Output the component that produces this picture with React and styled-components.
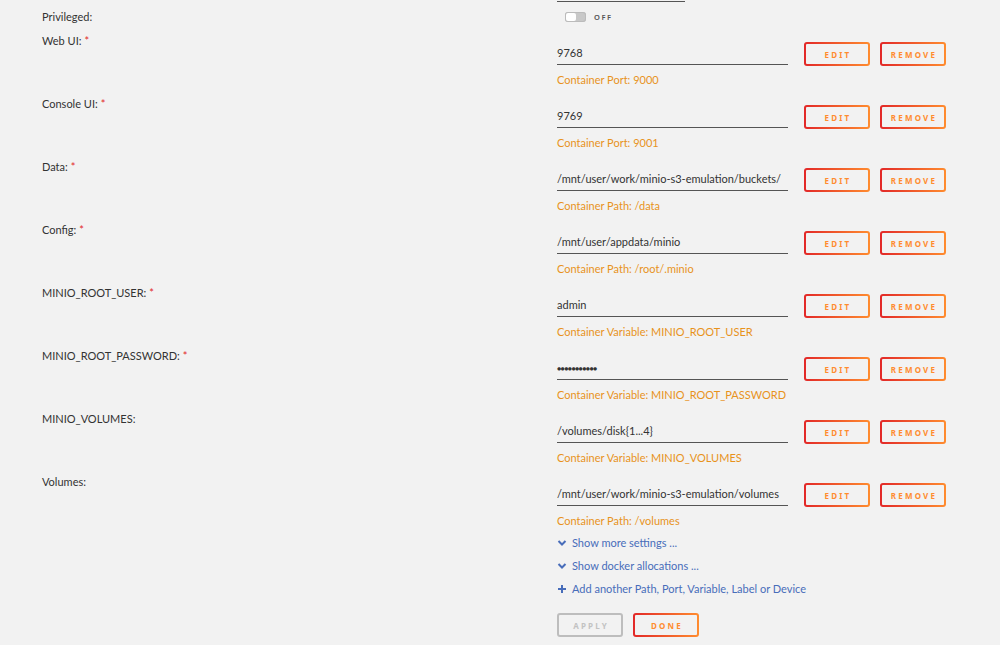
import React from "react";
import styled, { createGlobalStyle, css } from "styled-components";

const GlobalStyle = createGlobalStyle`
  html, body {
    margin: 0;
    padding: 0;
    background: #f2f2f2;
  }
  body {
    font-family: Lato, "Noto Sans", sans-serif;
    font-size: 11px;
    color: #333;
  }
`;

const Page = styled.div`
  width: 1000px;
  height: 645px;
  overflow: hidden;
  background: #f2f2f2;
`;

const TopLine = styled.div`
  margin-left: 557px;
  width: 128px;
  height: 1px;
  border-bottom: 1px solid #555;
`;

const Row = styled.div`
  display: grid;
  grid-template-columns: 515px 1fr;
  padding-left: 42px;
  ${(props) =>
    props.compact
      ? css`
          height: 24px;
          margin-top: 8px;
        `
      : css`
          height: 63px;
        `}
`;

const Label = styled.div`
  line-height: 14px;
  color: #333;
  .req {
    color: #e22828;
    margin-left: 3px;
  }
`;

const Cell = styled.div`
  padding-top: ${(props) => (props.compact ? "0" : "8px")};
`;

const Controls = styled.div`
  display: flex;
  align-items: flex-start;
  gap: 10px;
`;

const Field = styled.div`
  width: 231px;
  height: 22px;
  line-height: 22px;
  border-bottom: 1px solid #555;
  color: #333;
  white-space: nowrap;
  margin-right: 6px;
  ${(props) =>
    props.secret &&
    css`
      font-size: 7px;
      letter-spacing: -0.6px;
    `}
`;

const gradientBorder = css`
  border: 2px solid transparent;
  background: linear-gradient(#f2f2f2, #f2f2f2) padding-box,
    linear-gradient(90deg, #e22828, #ff8c2f) border-box;
  color: #ff8c2f;
`;

const Button = styled.button`
  box-sizing: border-box;
  width: 66px;
  height: 24px;
  border-radius: 3px;
  font-family: "Noto Sans", sans-serif;
  font-size: 8px;
  font-weight: 700;
  letter-spacing: 2.2px;
  text-transform: uppercase;
  padding: 0 0 0 2px;
  cursor: pointer;
  ${(props) =>
    props.disabled
      ? css`
          border: 2px solid #bdbdbd;
          background: #f2f2f2;
          color: #c2c2c2;
        `
      : gradientBorder}
`;

const Hint = styled.div`
  margin-top: 7px;
  line-height: 14px;
  color: #e8921c;
`;

const ToggleRow = styled.div`
  display: flex;
  align-items: center;
  gap: 8px;
  margin-left: 8px;
  height: 14px;
`;

const Switch = styled.span`
  position: relative;
  width: 21px;
  height: 10px;
  border-radius: 3px;
  background: #c8c8c8;
  box-shadow: inset 0 0 0 1px #bbb;
  &::before {
    content: "";
    position: absolute;
    left: 1px;
    top: 1px;
    width: 10px;
    height: 8px;
    border-radius: 2px;
    background: #fff;
  }
`;

const SwitchText = styled.span`
  font-family: "Noto Sans", sans-serif;
  font-size: 7.5px;
  letter-spacing: 1.5px;
  color: #555;
  font-weight: 600;
`;

const Links = styled.div`
  margin-left: 557px;
  margin-top: -2px;
  display: flex;
  flex-direction: column;
  gap: 9px;
`;

const LinkItem = styled.a`
  display: flex;
  align-items: center;
  gap: 5px;
  line-height: 14px;
  color: #486dba;
  text-decoration: none;
  cursor: pointer;
  svg {
    width: 10px;
    height: 10px;
    flex-shrink: 0;
  }
`;

const Footer = styled.div`
  margin-left: 557px;
  margin-top: 17px;
  display: flex;
  gap: 10px;
`;

const Chevron = () => (
  <svg viewBox="0 0 10 10">
    <path d="M1.5 3 L5 6.5 L8.5 3" fill="none" stroke="#486dba" strokeWidth="2" />
  </svg>
);

const Plus = () => (
  <svg viewBox="0 0 10 10">
    <path d="M5 1 V9 M1 5 H9" fill="none" stroke="#486dba" strokeWidth="2" />
  </svg>
);

const entries = [
  { label: "Web UI:", required: true, value: "9768", hint: "Container Port: 9000" },
  { label: "Console UI:", required: true, value: "9769", hint: "Container Port: 9001" },
  { label: "Data:", required: true, value: "/mnt/user/work/minio-s3-emulation/buckets/", hint: "Container Path: /data" },
  { label: "Config:", required: true, value: "/mnt/user/appdata/minio", hint: "Container Path: /root/.minio" },
  { label: "MINIO_ROOT_USER:", required: true, value: "admin", hint: "Container Variable: MINIO_ROOT_USER" },
  { label: "MINIO_ROOT_PASSWORD:", required: true, value: "●●●●●●●●●●●", secret: true, hint: "Container Variable: MINIO_ROOT_PASSWORD" },
  { label: "MINIO_VOLUMES:", value: "/volumes/disk{1...4}", hint: "Container Variable: MINIO_VOLUMES" },
  { label: "Volumes:", value: "/mnt/user/work/minio-s3-emulation/volumes", hint: "Container Path: /volumes" },
];

function ConfigRow({ entry }) {
  return (
    <Row>
      <Label>
        {entry.label}
        {entry.required && <span className="req">*</span>}
      </Label>
      <Cell>
        <Controls>
          <Field secret={entry.secret}>{entry.value}</Field>
          <Button>Edit</Button>
          <Button>Remove</Button>
        </Controls>
        <Hint>{entry.hint}</Hint>
      </Cell>
    </Row>
  );
}

export default function App() {
  return (
    <Page>
      <GlobalStyle />
      <TopLine />
      <Row compact>
        <Label>Privileged:</Label>
        <Cell compact>
          <ToggleRow>
            <Switch />
            <SwitchText>OFF</SwitchText>
          </ToggleRow>
        </Cell>
      </Row>
      {entries.map((entry) => (
        <ConfigRow key={entry.label} entry={entry} />
      ))}
      <Links>
        <LinkItem>
          <Chevron />
          Show more settings ...
        </LinkItem>
        <LinkItem>
          <Chevron />
          Show docker allocations ...
        </LinkItem>
        <LinkItem>
          <Plus />
          Add another Path, Port, Variable, Label or Device
        </LinkItem>
      </Links>
      <Footer>
        <Button disabled>Apply</Button>
        <Button>Done</Button>
      </Footer>
    </Page>
  );
}
